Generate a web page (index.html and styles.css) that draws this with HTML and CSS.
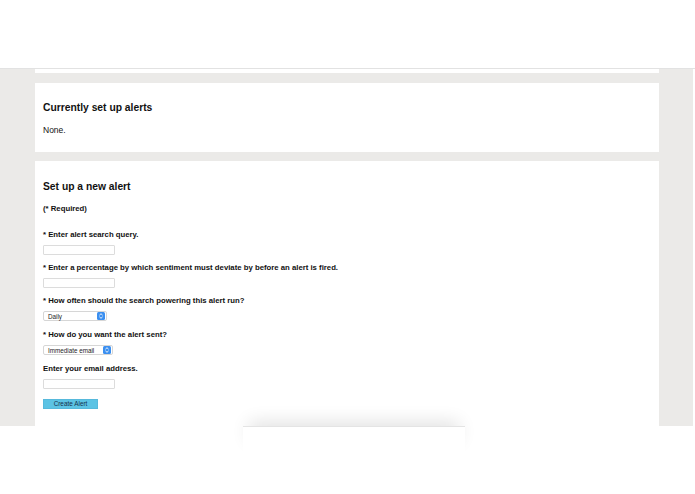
FILE: index.html
```html
<!DOCTYPE html>
<html lang="en">

<head>
    <meta charset="UTF-8">
    <meta name="viewport" content="width=device-width, initial-scale=1.0">
    <title>Sentiment Alerts</title>
    <link rel="stylesheet" href="styles.css">
</head>

<body>
    <div class="topbar"></div>

    <div class="page">
        <div class="card card-stub"></div>

        <div class="card current">
            <h2>Currently set up alerts</h2>
            <p class="none">None.</p>
        </div>

        <div class="card new-alert">
            <h2>Set up a new alert</h2>
            <p class="required">(* Required)</p>

            <div class="field">
                <label>* Enter alert search query.</label>
                <input type="text" class="text-input">
            </div>

            <div class="field">
                <label>* Enter a percentage by which sentiment must deviate by before an alert is fired.</label>
                <input type="text" class="text-input">
            </div>

            <div class="field field-select">
                <label>* How often should the search powering this alert run?</label>
                <div class="select select-daily">
                    <span>Daily</span>
                    <svg class="knob" width="8" height="8" viewBox="0 0 8 8">
                        <rect width="8" height="8" rx="1.5" fill="#3b8ff0"/>
                        <path d="M2.4 3.2 L4 1.7 L5.6 3.2 M2.4 4.8 L4 6.3 L5.6 4.8" stroke="#fff" stroke-width="0.9" fill="none"/>
                    </svg>
                </div>
            </div>

            <div class="field field-select">
                <label>* How do you want the alert sent?</label>
                <div class="select select-method">
                    <span>Immediate email</span>
                    <svg class="knob" width="8" height="8" viewBox="0 0 8 8">
                        <rect width="8" height="8" rx="1.5" fill="#3b8ff0"/>
                        <path d="M2.4 3.2 L4 1.7 L5.6 3.2 M2.4 4.8 L4 6.3 L5.6 4.8" stroke="#fff" stroke-width="0.9" fill="none"/>
                    </svg>
                </div>
            </div>

            <div class="field field-last">
                <label>Enter your email address.</label>
                <input type="text" class="text-input">
            </div>

            <button class="btn">Create Alert</button>
        </div>
    </div>

    <div class="bottom">
        <div class="popup-edge"></div>
    </div>
</body>

</html>
```

FILE: styles.css
```css
body,
html {
    margin: 0;
    padding: 0;
    background: #fff;
    font-family: "Liberation Sans", Arial, sans-serif;
    color: #111;
}

.topbar {
    height: 68px;
    border-bottom: 1px solid #e2e2e2;
}

.page {
    width: 693px;
    height: 357px;
    overflow: hidden;
    background: #ebeae8;
    box-sizing: border-box;
    padding: 0 34px 0 35px;
}

.card {
    background: #fff;
    padding: 0 8px;
}

.card-stub {
    height: 4px;
    margin-bottom: 10px;
}

h2 {
    margin: 0;
    font-size: 10.3px;
    line-height: 12px;
    font-weight: bold;
}

.current {
    padding-top: 19px;
    padding-bottom: 16px;
    margin-bottom: 9px;
}

.current h2 {
    margin-bottom: 10px;
}

.none {
    margin: 0;
    font-size: 8.5px;
    line-height: 12px;
}

.new-alert {
    padding-top: 20px;
    padding-bottom: 40px;
}

.new-alert h2 {
    margin-bottom: 11px;
}

.required {
    margin: 0 0 16px;
    font-size: 7.75px;
    line-height: 10px;
    font-weight: bold;
}

.field {
    margin-bottom: 8px;
}

.field-select {
    margin-bottom: 9px;
}

.field-last {
    margin-bottom: 10px;
}

.field label {
    display: block;
    font-size: 7.75px;
    line-height: 10px;
    font-weight: bold;
    margin-bottom: 5px;
}

.text-input {
    display: block;
    width: 72px;
    height: 10px;
    box-sizing: border-box;
    margin: 0;
    padding: 0;
    border: 1px solid #dcdcdc;
    border-radius: 1px;
    background: #fff;
}

.select {
    display: flex;
    align-items: center;
    justify-content: space-between;
    height: 10px;
    box-sizing: border-box;
    padding: 0 1px 0 4px;
    border: 1px solid #d6d6d6;
    border-radius: 2px;
    background: #fff;
    font-size: 6.3px;
    color: #222;
}

.select-daily {
    width: 64px;
}

.select-method {
    width: 70px;
}

.knob {
    display: block;
}

.btn {
    display: block;
    width: 55px;
    height: 10px;
    margin: 0;
    padding: 0;
    border: 1px solid #56b9dc;
    background: #5cc3e4;
    font-family: "Liberation Sans", Arial, sans-serif;
    font-size: 6.4px;
    line-height: 8px;
    color: #17324d;
}

.bottom {
    position: relative;
    height: 68px;
}

.popup-edge {
    position: absolute;
    top: 0;
    left: 243px;
    width: 222px;
    height: 30px;
    background: #fff;
    border-top: 1px solid #e4e4e4;
    box-shadow: 0 -10px 18px -6px rgba(0, 0, 0, 0.12);
}
```
